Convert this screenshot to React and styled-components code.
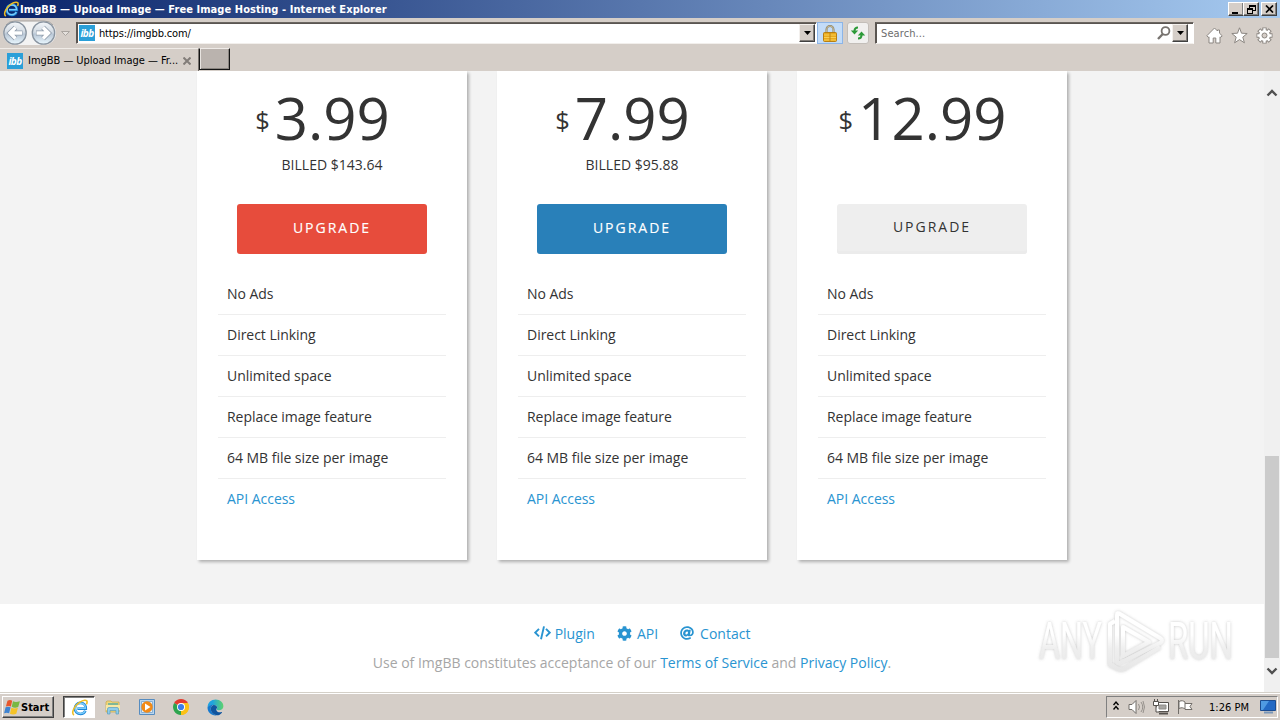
import React from "react";
import styled, { createGlobalStyle } from "styled-components";
import { FaCog, FaAt } from "react-icons/fa";

const GlobalStyle = createGlobalStyle`
  * { box-sizing: border-box; }
  body { margin: 0; overflow: hidden; }
  svg { display: block; flex: none; }
`;

const face = "#d5cec8";
const link = "#2994d1";
const uiFont = `"DejaVu Sans Condensed", "DejaVu Sans", sans-serif`;

const Screen = styled.div`
  position: relative;
  width: 1280px;
  height: 720px;
  display: flex;
  flex-direction: column;
  background: ${face};
  font-family: ${uiFont};
  font-size: 11px;
  color: #000;
`;

const TitleBar = styled.header`
  flex: none;
  height: 18px;
  display: flex;
  align-items: center;
  gap: 1px;
  padding: 0 3px 0 3px;
  background: linear-gradient(90deg, #0a246a, #a6caf0);
`;

const UiText = styled.span`
  display: inline-block;
  white-space: pre;
  line-height: 14px;
  padding-top: ${(p) => p.$drop || 0}px;
  color: ${(p) => p.$color || "#000"};
  font-weight: ${(p) => (p.$bold ? "bold" : "normal")};
  letter-spacing: ${(p) => p.$track || 0}px;
`;

const Spacer = styled.div`
  flex: 1;
`;

const WindowButton = styled.div`
  width: 16px;
  height: 14px;
  margin-left: ${(p) => p.$gap || 0}px;
  display: flex;
  align-items: center;
  justify-content: center;
  background: ${face};
  border: 1px solid;
  border-color: #fff #404040 #404040 #fff;
  box-shadow: inset -1px -1px #808080;
`;

const ToolBar = styled.div`
  flex: none;
  height: 30px;
  display: flex;
  align-items: flex-start;
  padding: 4px 7px 0 2px;
`;

const NavButtons = styled.div`
  width: 74px;
  height: 26px;
  margin-top: -2px;
`;

const Field = styled.div`
  width: ${(p) => p.$width}px;
  height: 22px;
  margin-left: ${(p) => p.$gap || 0}px;
  display: flex;
  align-items: center;
  gap: ${(p) => p.$space}px;
  padding: 0 ${(p) => p.$end || 0}px 0 ${(p) => p.$start}px;
  background: #fff;
  border: 1px solid;
  border-color: #6a6560 #fff #f2efec #5b5652;
  box-shadow: inset 1px 1px #5a5551;
`;

const DropButton = styled.div`
  width: 16px;
  height: 18px;
  display: flex;
  align-items: center;
  justify-content: center;
  background: ${face};
  border: 1px solid;
  border-color: #f3f0ed #404040 #404040 #f3f0ed;
  box-shadow: inset -1px -1px #807c78;
`;

const ToolButton = styled.div`
  width: ${(p) => p.$width}px;
  height: 22px;
  margin-left: ${(p) => p.$gap}px;
  display: flex;
  align-items: center;
  justify-content: center;
  background: ${(p) => (p.$active ? "#c3dcf8" : "#f1f0ef")};
  border: 1px solid ${(p) => (p.$active ? "#8cb5e8" : "#c3beb9")};
  border-radius: ${(p) => (p.$active ? 0 : 3)}px;
`;

const CommandIcons = styled.div`
  display: flex;
  gap: 8px;
  margin: 5px 0 0 12px;
`;

const Favicon = styled.span`
  width: 16px;
  height: 16px;
  display: flex;
  align-items: center;
  justify-content: center;
  background: #2a9fd8;
  color: #fff;
  font: italic bold 10px/16px "Open Sans", sans-serif;
  letter-spacing: -0.6px;
`;

const TabRow = styled.div`
  flex: none;
  height: 23px;
  display: flex;
`;

const Tab = styled.div`
  width: 199px;
  height: 23px;
  display: flex;
  align-items: center;
  padding: 1px 7px 0 7px;
  gap: 4px;
  border-top: 1px solid #f0ece8;
  border-right: 1px solid #76716d;
`;

const TabTitle = styled.div`
  flex: 1;
  display: flex;
  padding-left: 1px;
`;

const NewTab = styled.div`
  width: 31px;
  height: 22px;
  background: #bab3ae;
  border: 1px solid;
  border-color: #efebe8 #141414 #141414 #141414;
  box-shadow: inset 1px 0 #e8e4e0, inset -1px -1px #8a8580;
`;

const Viewport = styled.div`
  flex: none;
  height: 621px;
  display: flex;
`;

const Page = styled.main`
  width: 1264px;
  display: flex;
  flex-direction: column;
  background: #f3f3f3;
  font-family: "Open Sans", sans-serif;
  font-size: 14px;
  color: #333;
`;

const Plans = styled.section`
  height: 533px;
  overflow: hidden;
  display: flex;
  gap: 30px;
  padding-left: 197px;
`;

const Card = styled.article`
  width: 270px;
  height: 489px;
  padding: 12px 20px 0;
  background: #fff;
  box-shadow: 2px 2px 3px rgba(0, 0, 0, 0.28);
`;

const Price = styled.div`
  height: 72px;
  display: flex;
  justify-content: center;
  padding-right: 19px;
  font-size: 58.2px;
  line-height: 69px;
`;

const Currency = styled.span`
  font-size: 25.5px;
  line-height: 75px;
  margin-right: 5px;
`;

const Billed = styled.div`
  height: 20px;
  text-align: center;
  line-height: 20px;
`;

const UpgradeButton = styled.button`
  display: block;
  width: 190px;
  height: 50px;
  margin: 29px auto 20px;
  padding: 0 0 ${(p) => (p.$flat ? 5 : 3)}px 0;
  border: 0;
  border-radius: 3px;
  background: ${(p) => p.$fill};
  color: ${(p) => p.$ink};
  box-shadow: ${(p) => (p.$flat ? "inset 0 -3px #ebebeb" : "none")};
  font: 400 14px "Open Sans", sans-serif;
  letter-spacing: 2px;
  -webkit-text-stroke: ${(p) => (p.$flat ? 0 : 0.15)}px currentColor;
`;

const FeatureList = styled.ul`
  margin: 0 1px;
  padding: 0;
  list-style: none;
`;

const Feature = styled.li`
  height: 41px;
  padding-left: 9px;
  line-height: 40px;
  letter-spacing: -0.03px;
  border-bottom: 1px solid ${(p) => (p.$link ? "transparent" : "#eee")};
  color: ${(p) => (p.$link ? link : "#333")};
`;

const Footer = styled.footer`
  height: 88px;
  background: #fff;
  padding-top: 20px;
`;

const FooterLinks = styled.nav`
  display: flex;
  justify-content: center;
  gap: 22px;
  height: 20px;
  padding-left: 20px;
  color: ${link};
`;

const FooterLink = styled.a`
  display: flex;
  align-items: center;
  gap: ${(p) => p.$gap}px;
  line-height: 20px;
  svg { margin-bottom: 2px; }
`;

const Legal = styled.p`
  margin: 9px 0 0;
  text-align: center;
  line-height: 20px;
  color: #a6a6a6;
  a { color: ${link}; }
`;

const ScrollBar = styled.aside`
  width: 16px;
  display: flex;
  flex-direction: column;
  align-items: center;
  justify-content: space-between;
  padding: 17px 0 16px;
  background: #f0f0f0;
`;

const Thumb = styled.div`
  width: 14px;
  height: 202px;
  margin: 357px 0 7px;
  background: #cbcbcb;
`;

const TaskBar = styled.footer`
  flex: 1;
  display: flex;
  align-items: center;
  padding: 1px 2px 0;
  border-top: 1px solid #d4d0c8;
  box-shadow: inset 0 1px #fff;
`;

const StartButton = styled.div`
  width: 52px;
  height: 22px;
  display: flex;
  align-items: center;
  border: 1px solid;
  border-color: #fff #404040 #404040 #fff;
  box-shadow: inset -1px -1px #808080;
`;

const TaskItem = styled.div`
  width: ${(p) => (p.$active ? 32 : 34)}px;
  height: 22px;
  display: flex;
  align-items: center;
  justify-content: center;
  margin: ${(p) => (p.$active ? "0 1px 0 9px" : "0")};
  border: ${(p) => (p.$active ? "1px solid" : "0")};
  border-color: #404040 #fff #fff #404040;
  background: ${(p) => (p.$active ? "#fff" : "none")};
  box-shadow: ${(p) => (p.$active ? "inset 1px 1px #808080" : "none")};
`;

const Tray = styled.div`
  width: 172px;
  height: 22px;
  display: flex;
  align-items: center;
  padding: 0 1px 0 6px;
  border: 1px solid;
  border-color: #808080 #fff #fff #808080;
`;

const Clock = styled.div`
  width: 77px;
  display: flex;
  justify-content: center;
  padding-left: 1px;
`;

const Watermark = styled.div`
  position: absolute;
  left: 1030px;
  top: 602px;
`;

const IeLogo = ({ size }) => (
  <svg width={size} height={size} viewBox="0 0 16 16" fill="none">
    <path d="M13.5 11.1c-.8 1.9-2.5 3-4.6 3-3 0-5.2-2.2-5.2-5.1 0-3 2.2-5.3 5.2-5.3s5 2.2 5 5.3H6" stroke="#1c86d8" strokeWidth="2.5" />
    <path d="M13.3 11c-.8 1.7-2.4 2.7-4.4 2.7C6 13.7 4 11.6 4 9s2-5 4.9-5c2.7 0 4.6 2 4.7 4.7H6" stroke="#7bcdfa" strokeWidth="1.3" />
    <path d="M2.800 15.200C-.3 13 3.500 6 8 3.200 11.300 1 15.500.1 15.100 3.300c0 .6-.3 1.200-.6 1.700" stroke="#eebd22" strokeWidth="1.5" />
  </svg>
);

const NavArrows = () => (
  <svg width="72" height="26" viewBox="0 0 72 26">
    <defs>
      <linearGradient id="orb" x1="0" y1="0" x2="0" y2="1">
        <stop offset="0" stopColor="#f4f7fa" />
        <stop offset=".45" stopColor="#d3dbe3" />
        <stop offset=".55" stopColor="#b9c7d6" />
        <stop offset="1" stopColor="#eaf8ff" />
      </linearGradient>
    </defs>
    <path d="M13 1h29a12 12 0 0 1 0 24H13A12 12 0 0 1 13 1" fill="#f3f3f3" />
    <path d="M4 5q3-4 9-4h29q6 0 9 4" fill="none" stroke="#a5a19e" />
    {[13, 41.5].map((x) => (
      <circle key={x} cx={x} cy="13" r="11.2" fill="url(#orb)" stroke="#8994a0" strokeWidth="1.3" />
    ))}
    <g fill="none" stroke="#8f9cab" strokeWidth="5">
      <path d="M20.500 13H8m5.500-5.500L8 13l5.500 5.500M34 13h12.500M41 7.500l5.500 5.500-5.500 5.500" />
    </g>
    <g fill="none" stroke="#fff" strokeWidth="3.4">
      <path d="M20 13H8m5.500-5.500L8 13l5.500 5.500M34.500 13h12M41 7.500l5.500 5.500-5.500 5.500" />
    </g>
    <path d="M59.500 11.500h8l-4 4z" fill="#e5e1dd" stroke="#aaa5a0" />
  </svg>
);

const Caret = () => (
  <svg width="7" height="4" viewBox="0 0 7 4"><path d="M0 0h7L3.5 4z" /></svg>
);

const Lock = () => (
  <svg width="14" height="17" viewBox="0 0 14 17">
    <path d="M3.500 8V4.500a3.500 3.500 0 0 1 7 0V8" fill="none" stroke="#8d8161" strokeWidth="2" />
    <path d="M3.500 8V4.500a3.500 3.500 0 0 1 7 0V8" fill="none" stroke="#d9cfae" strokeWidth=".7" />
    <rect x=".5" y="7.500" width="13" height="9" rx="1" fill="#e9a91d" stroke="#b77f13" />
    <path d="M1 10h12M1 12.500h12M1 15h12" stroke="#f8cf55" />
    <path d="M7 8v8" stroke="#bd8518" />
  </svg>
);

const Refresh = () => (
  <svg width="16" height="14" viewBox="0 0 16 14" fill="none" stroke="#2c9a38" strokeWidth="2">
    <path d="M8 1.500Q4.500 1.500 4.500 5M8 12.500Q11.500 12.500 11.500 9" />
    <path d="M.8 4.500h7.400L4.500 8.500zM7.800 9.500h7.400L11.500 5.500z" fill="#2c9a38" stroke="none" />
  </svg>
);

const Magnifier = () => (
  <svg width="14" height="14" viewBox="0 0 14 14" fill="none" stroke="#77736f" strokeWidth="1.8">
    <circle cx="8.500" cy="5" r="3.900" /><path d="M5.800 8L1 13" strokeWidth="2.400" />
  </svg>
);

const Home = () => (
  <svg width="17" height="17" viewBox="0 0 17 17">
    <path d="M8.500 1L.8 8.800l1.500 1.600.7-.6V16h4.200v-5h2.600v5H14V9.800l.7.6 1.500-1.600-2.700-2.600V3h-2v1z" fill="#fff" stroke="#8b8681" />
  </svg>
);

const Star = () => (
  <svg width="17" height="17" viewBox="0 0 17 17">
    <path d="M8.500 .8l2 5.400 5.700.3-4.400 3.600 1.600 5.700-4.900-3.200-4.900 3.200 1.600-5.700L.8 6.500l5.700-.3z" fill="#fff" stroke="#8b8681" />
  </svg>
);

const Gear = () => (
  <svg width="17" height="17" viewBox="0 0 17 17" fill="none">
    <g stroke="#8b8681" strokeWidth="4.4">
      <path d="M8.500 .5v16M.5 8.500h16M2.800 2.800l11.400 11.400M14.200 2.800L2.800 14.200" />
    </g>
    <circle cx="8.500" cy="8.500" r="6.200" fill="#8b8681" />
    <g stroke="#fff" strokeWidth="2.400">
      <path d="M8.500 1.300v14.400M1.300 8.500h14.400M3.400 3.400l10.200 10.200M13.600 3.400L3.400 13.600" />
    </g>
    <circle cx="8.500" cy="8.500" r="5.400" fill="#fff" />
    <circle cx="8.500" cy="8.500" r="2.500" fill={face} stroke="#8b8681" />
  </svg>
);

const Chevron = ({ up }) => (
  <svg width="12" height="9" viewBox="0 0 12 9" fill="none" stroke="#505050" strokeWidth="2.4">
    <path d={up ? "M1.500 7.500L6 3l4.500 4.500" : "M1.500 1.500L6 6l4.500-4.500"} />
  </svg>
);

const CodeMark = () => (
  <svg width="17" height="14" viewBox="0 0 17 14" fill="none" stroke="currentColor" strokeWidth="1.9">
    <path d="M5 2.800L1.300 6.600 5 10.400M12 2.800l3.700 3.800-3.700 3.800M10 .4L7 13.200" />
  </svg>
);

const Flag = () => (
  <svg width="18" height="17" viewBox="0 0 17 17">
    <path d="M4 1.700c2-1.200 3.300-.9 4.700 0L7.400 7.600c-1.500-.9-3-1-5 0z" fill="#e7572c" />
    <path d="M9.500 2.200c2 1.100 3.800 1 6.900 0l-1.700 5.700c-2 1-4.400 1-6.500-.1z" fill="#79b843" />
    <path d="M2.100 8.300c1.700-.8 3.300-.9 5 0l-1.500 6c-1.600-.9-3-.9-5 0z" fill="#3e83d1" />
    <path d="M7.900 8.700c2 1 4.300 1 6.500 0l-1.600 6c-2.100 1-4.200 1-6.300 0z" fill="#f5c326" />
  </svg>
);

const Folder = () => (
  <svg width="16" height="16" viewBox="0 0 16 16">
    <path d="M1 3l1-1h4l1 1h7v10H1z" fill="#efd67c" stroke="#c6a84c" strokeWidth=".7" />
    <path d="M3 4h10v3H3z" fill="#7fb797" /><path d="M1 6h14v5H1z" fill="#f8e8a4" />
    <path d="M2.500 15V10q0-1.500 1.500-1.500h8q1.500 0 1.500 1.500v5h-2.500v-3.500h-6V15z" fill="#8fcdeb" stroke="#599dbe" strokeWidth=".7" />
  </svg>
);

const Player = () => (
  <svg width="16" height="16" viewBox="0 0 16 16">
    <path d="M.5.5h15v15H.5z" fill="#b9d6ef" stroke="#568cc0" /><path d="M2.500 2.500h11v11h-11z" fill="#e6f0f8" stroke="#88afd3" />
    <circle cx="8" cy="8" r="5.700" fill="#f28a17" /><path d="M6 4.500L11.500 8 6 11.500z" fill="#fff" />
  </svg>
);

const Chrome = () => (
  <svg width="16" height="16" viewBox="0 0 16 16">
    <path d="M8 8L1.100 4A8 8 0 0 1 14.900 4z" fill="#e33b2e" /><path d="M8 8L14.900 4A8 8 0 0 1 8 16z" fill="#fbc116" />
    <path d="M8 8L8 16A8 8 0 0 1 1.100 4z" fill="#2da44e" /><path d="M8 4h6.900A8 8 0 0 1 8 16l3.500-6z" fill="#fbc116" />
    <circle cx="8" cy="8" r="4" fill="#fff" /><circle cx="8" cy="8" r="3.100" fill="#3b7de9" />
  </svg>
);

const Edge = () => (
  <svg width="17" height="17" viewBox="0 0 17 17">
    <defs>
      <linearGradient id="edge"><stop offset=".3" stopColor="#1fa3e0" /><stop offset="1" stopColor="#5fd36c" /></linearGradient>
    </defs>
    <path d="M.6 8.500C.6 3.600 4.200.6 8.700.6c4.500 0 7.700 3 7.700 6.700 0 2.800-2.200 4-4.600 4-1.800 0-2.600-.8-1.900-1.700.9-1.200.2-3.600-2.800-3.600C4.500 6 1.600 6.500.6 8.500" fill="url(#edge)" />
    <path d="M.5 8.600C1.500 6.500 4 5.500 6.500 5.800c-2 .8-3 2.600-2.700 4.800.4 3 3 5.400 6.200 5.700C4.500 17 .4 13.500.5 8.600" fill="#1679cf" />
    <path d="M6.500 5.900c2.500-.2 4 1.500 3.600 3-2.200 1.600.4 5.300 4.400 4.200.5-.1.800.1.400.6-1.200 1.700-3 2.600-4.900 2.600-3.400-.3-5.900-2.700-6.200-5.700-.2-2.200.7-4 2.700-4.700" fill="#10559f" />
  </svg>
);

const TrayIcons = () => (
  <svg width="84" height="18" viewBox="0 0 84 18" fill="none" stroke="#716d69">
    <path d="M.5 7l2.500-3 2.500 3M.5 11.500l2.500-3 2.500 3" stroke="#000" strokeWidth="1.400" />
    <path d="M16 6.500h3l4-4v13l-4-4h-3z" fill="#fff" />
    <path d="M25.500 6q2 3 0 6M28 4q3.500 5 0 10M30 3q3 6 0 12" stroke="#96918c" />
    <path d="M43.500 4.500h12v9h-12z" fill="#fff" stroke="#55514d" /><path d="M46 7h7v4h-7z" fill="#a7a5a2" stroke="#8d8a86" />
    <path d="M46 15.500h9" stroke="#55514d" strokeWidth="2" />
    <path d="M40.500 3.500h5v4h-5zM41.500 1v2M44.500 1v2M43 8v6h3" fill="#fff" stroke="#55514d" />
    <path d="M65.500 2v14M66 3.500c3-1.500 4.500-.5 6 .5v7c-1.500-1-3-2-6-.5zM72 5.500h7l-2 3 2 3h-7" fill="#fff" />
  </svg>
);

const Desktop = () => (
  <svg width="16" height="14" viewBox="0 0 16 14">
    <path d="M.5.5h15v10H.5z" fill="#2369c4" stroke="#1b4c91" /><path d="M1 1h8L3 10H1z" fill="#4f9ae2" /><path d="M4 12.500h9" stroke="#7996b8" strokeWidth="2" />
  </svg>
);

const Brand = () => (
  <svg width="250" height="82" viewBox="0 0 250 82">
    <defs>
      <linearGradient id="fade" gradientUnits="userSpaceOnUse" x1="0" y1="8" x2="0" y2="70">
        <stop offset=".4" stopColor="#fff" /><stop offset=".62" stopColor="#efefef" /><stop offset="1" stopColor="#e6e6e6" />
      </linearGradient>
      <filter id="glow" x="-10%" y="-10%" width="120%" height="120%">
        <feDropShadow dx="0" dy="0" stdDeviation="1.7" floodColor="#777" floodOpacity=".42" />
      </filter>
    </defs>
    <g filter="url(#glow)" fill="url(#fade)" fontFamily="Roboto, sans-serif" fontSize="51" fontWeight="400">
      <text x="9" y="57" textLength="63" lengthAdjust="spacingAndGlyphs">ANY</text>
      <text x="138" y="57" textLength="65" lengthAdjust="spacingAndGlyphs">RUN</text>
      <g fill="none" stroke="url(#fade)" strokeWidth="4" strokeLinejoin="round">
        <path d="M87 59V13q0-3 3-1l40 24q4 2.500 0 5L90 61q-3 1-3-2z" />
        <path d="M93 25l26 15-26 14z" />
        <path d="M85 19l-5 3v41l6 3M80 62l8 5q3 1 6 0l36-22" />
      </g>
    </g>
  </svg>
);

const plans = [
  { price: "3.99", billed: "BILLED $143.64", fill: "#e74c3c", ink: "#fff" },
  { price: "7.99", billed: "BILLED $95.88", fill: "#2980b9", ink: "#fff" },
  { price: "12.99", billed: "", fill: "#eee", ink: "#333", flat: true },
];
const features = ["No Ads", "Direct Linking", "Unlimited space", "Replace image feature", "64 MB file size per image"];

export default function App() {
  return (
    <Screen>
      <GlobalStyle />
      <TitleBar>
        <IeLogo size={16} />
        <UiText $bold $color="#fff" $track={0.07} $drop={2}>ImgBB — Upload Image — Free Image Hosting - Internet Explorer</UiText>
        <Spacer />
        <WindowButton><svg width="10" height="9"><path d="M1 7h6v2H1z" /></svg></WindowButton>
        <WindowButton $gap={-2}>
          <svg width="9" height="9" fill="none" stroke="#000" shapeRendering="crispEdges"><path d="M2.5 3V.5h6v5H6M2 1.500h7M.5 3.500h5v5h-5zM0 4.500h6" /></svg>
        </WindowButton>
        <WindowButton $gap={1}>
          <svg width="9" height="8" fill="none" stroke="#000" strokeWidth="1.7"><path d="M1 .5l7 7M8 .5l-7 7" /></svg>
        </WindowButton>
      </TitleBar>
      <ToolBar>
        <NavButtons><NavArrows /></NavButtons>
        <Field $width={741} $start={2} $end={1} $space={4}>
          <Favicon>ibb</Favicon>
          <UiText $track={-0.15} $drop={2}>https://imgbb.com/</UiText>
          <Spacer />
          <DropButton><Caret /></DropButton>
        </Field>
        <ToolButton $width={26} $gap={0} $active><Lock /></ToolButton>
        <ToolButton $width={22} $gap={4}><Refresh /></ToolButton>
        <Field $width={319} $gap={6} $start={5} $end={5} $space={1}>
          <UiText $color="#6d6d6d" $track={0.1} $drop={2}>Search...</UiText>
          <Spacer />
          <Magnifier />
          <DropButton><Caret /></DropButton>
        </Field>
        <CommandIcons><Home /><Star /><Gear /></CommandIcons>
      </ToolBar>
      <TabRow>
        <Tab>
          <Favicon>ibb</Favicon>
          <TabTitle><UiText $track={-0.03} $drop={1}>ImgBB — Upload Image — Fr...</UiText></TabTitle>
          <svg width="8" height="8" stroke="#827d79" strokeWidth="2"><path d="M.5.5l7 7M7.5.5l-7 7" /></svg>
        </Tab>
        <NewTab />
      </TabRow>
      <Viewport>
        <Page>
          <Plans>
            {plans.map((p) => (
              <Card key={p.price}>
                <Price><Currency>$</Currency>{p.price}</Price>
                {p.billed ? <Billed>{p.billed}</Billed> : <Billed />}
                <UpgradeButton $fill={p.fill} $ink={p.ink} $flat={p.flat}>UPGRADE</UpgradeButton>
                <FeatureList>
                  {features.map((f) => <Feature key={f}>{f}</Feature>)}
                  <Feature $link>API Access</Feature>
                </FeatureList>
              </Card>
            ))}
          </Plans>
          <Footer>
            <FooterLinks>
              <FooterLink $gap={4}><CodeMark />Plugin</FooterLink>
              <FooterLink $gap={5}><FaCog size={15} />API</FooterLink>
              <FooterLink $gap={6}><FaAt size={14} />Contact</FooterLink>
            </FooterLinks>
            <Legal>Use of ImgBB constitutes acceptance of our <a>Terms of Service</a> and <a>Privacy Policy</a>.</Legal>
          </Footer>
        </Page>
        <ScrollBar><Chevron up /><Thumb /><Chevron /></ScrollBar>
      </Viewport>
      <TaskBar>
        <StartButton><Flag /><UiText $bold $drop={1}>Start</UiText></StartButton>
        <TaskItem $active><IeLogo size={17} /></TaskItem>
        <TaskItem><Folder /></TaskItem>
        <TaskItem><Player /></TaskItem>
        <TaskItem><Chrome /></TaskItem>
        <TaskItem><Edge /></TaskItem>
        <Spacer />
        <Tray>
          <TrayIcons />
          <Clock><UiText $drop={1}>1:26 PM</UiText></Clock>
          <Desktop />
        </Tray>
      </TaskBar>
      <Watermark><Brand /></Watermark>
    </Screen>
  );
}
